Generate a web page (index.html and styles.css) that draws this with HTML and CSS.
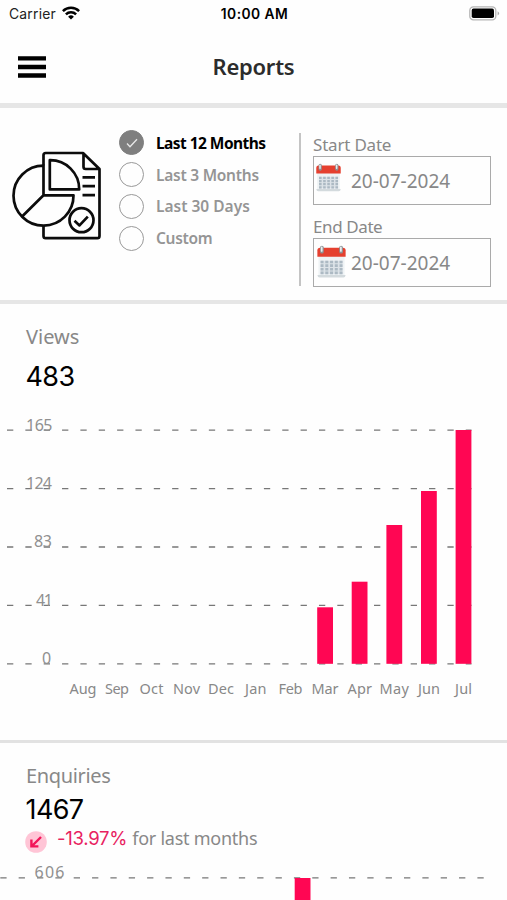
FILE: index.html
```html
<!DOCTYPE html>
<html lang="en">
<head>
<meta charset="utf-8">
<title>Reports</title>
<link rel="stylesheet" href="styles.css">
</head>
<body>
<div class="screen">
  <div class="status">
    <div class="carrier">Carrier
      <svg width="18" height="14" viewBox="0 0 18 14" fill="none" stroke="#000" stroke-width="2.5"><path d="M.9 5.2a11.5 11.5 0 0 1 16.2 0M3.9 8.3a7.2 7.2 0 0 1 10.2 0"/><path d="M9 13.6 6.1 10.7a4.1 4.1 0 0 1 5.8 0z" fill="#000" stroke="none"/></svg>
    </div>
    <div class="clock">10:00 AM</div>
    <svg class="battery" width="31" height="15" viewBox="0 0 31 15"><rect x=".8" y=".8" width="26" height="13" rx="3.6" fill="#fff" stroke="#b5b5b5" stroke-width="1.3"/><rect x="2.7" y="2.6" width="22.3" height="9.4" rx="1.8"/><path d="M28.6 5.2q3 2.2 0 4.4z" fill="#aaa"/></svg>
  </div>
  <header class="bar">
    <svg class="menu" width="28" height="22" viewBox="0 0 28 22"><path d="M0 2.4h28M0 11h28M0 19.5h28" stroke="#000" stroke-width="4.4"/></svg>
    <h1>Reports</h1>
  </header>
  <section class="filters">
    <svg class="report" width="91" height="90" viewBox="0 0 91 90" fill="none" stroke="#0c0c0c" stroke-width="2.7" stroke-linejoin="round">
      <path d="M31.5 14.5V4.2Q31.5 2 33.7 2H71L87.5 18V85Q87.5 87.2 85.3 87.2H33.7Q31.5 87.2 31.5 85V74.5M71.5 2V15.8Q71.5 18 73.7 18H87"/>
      <path d="M31.5 14.6A30 30 0 1 0 61.5 44.3H31.5zM31.5 44.3 10.6 65"/>
      <path d="M37.8 9.2A29 29 0 0 1 67.2 38.4H37.8z"/>
      <circle cx="69.5" cy="69.2" r="12" fill="#fff"/>
      <path d="M62.5 69.8l5 4.6 8.3-8.8M70.5 26.3H83M70.5 35.2H83M70.5 44.1H83"/>
    </svg>
    <div class="ranges">
      <div class="range on"><span class="dot"><svg width="14" height="12" viewBox="0 0 14 12"><path d="M2 6.5l3 3.3 7-7.6" fill="none" stroke="#e8e8e8" stroke-width="1.3"/></svg></span><span class="r12">Last 12 Months</span></div>
      <div class="range"><span class="dot"></span><span class="r3">Last 3 Months</span></div>
      <div class="range"><span class="dot"></span><span class="r30">Last 30 Days</span></div>
      <div class="range"><span class="dot"></span><span class="rc">Custom</span></div>
    </div>
    <div class="dates">
      <label class="ls">Start Date</label>
      <div class="field">
        <svg class="cal small" viewBox="0 0 28 32"><use href="#calendar"/></svg>
        <span>20-07-2024</span>
      </div>
      <label class="le">End Date</label>
      <div class="field">
        <svg class="cal" viewBox="0 0 28 32">
          <g id="calendar">
            <path d="M1.3 10h25.4v19q0 2-2 2h-21.4q-2 0-2-2z" fill="#eff3f5"/>
            <path d="M.5 29h27v.5q0 2-2 2h-23q-2 0-2-2z" fill="#d3dadd"/>
            <path d="M.3 11.5V5.2q0-2.6 2.6-2.6h22.2q2.6 0 2.6 2.6v6.3z" fill="#e5402f"/>
            <path d="M3.4 16.5h21.5M3.4 20h21.5M3.4 23.5h21.5M3.4 27h21.5" stroke="#a9b6c0" stroke-width="2.5" stroke-dasharray="2.9 1.7"/>
            <path d="M3.4 15.3h21.2v12.9H3.4z" fill="#b4c1c9" fill-opacity=".3"/>
            <path d="M4.7 2.5v4M23.3 2.5v4" stroke="#8d9396" stroke-width="3.6" stroke-linecap="round"/>
            <path d="M4.5 2.3v3.4M23.1 2.3v3.4" stroke="#e8ecee" stroke-width="1.7" stroke-linecap="round"/>
          </g>
        </svg>
        <span>20-07-2024</span>
      </div>
    </div>
  </section>
  <section class="views">
    <h2 class="tv">Views</h2>
    <div class="total">483</div>
    <svg class="chart" width="507" height="300" viewBox="0 410 507 300">
      <g class="grid"><path d="M7 430.2H471.5M7 488.7H471.5M7 547H471.5M7 605.4H471.5M7 663.8H471.5"/></g>
      <g class="bars">
        <rect x="317.2" y="607.3" width="15.8" height="56.5"/>
        <rect x="351.7" y="581.7" width="15.8" height="82.1"/>
        <rect x="386.4" y="525" width="15.8" height="138.8"/>
        <rect x="421" y="491" width="15.8" height="172.8"/>
        <rect x="455.6" y="430" width="15.8" height="233.8"/>
      </g>
      <g class="axis">
        <text x="26" y="430.5" textLength="26.5">165</text>
        <text x="26" y="489" textLength="26">124</text>
        <text x="34" y="547.3" textLength="18">83</text>
        <text x="36" y="605.7" textLength="17">41</text>
        <text x="42" y="664.1" textLength="10">0</text>
      </g>
      <g class="months">
        <text x="69.5" y="693.5" textLength="27">Aug</text>
        <text x="105" y="693.5" textLength="24">Sep</text>
        <text x="139.5" y="693.5" textLength="24">Oct</text>
        <text x="173" y="693.5" textLength="27">Nov</text>
        <text x="208" y="693.5" textLength="26">Dec</text>
        <text x="245" y="693.5" textLength="21.5">Jan</text>
        <text x="278.5" y="693.5" textLength="24">Feb</text>
        <text x="311.5" y="693.5" textLength="27">Mar</text>
        <text x="347.5" y="693.5" textLength="24.5">Apr</text>
        <text x="379.5" y="693.5" textLength="29.5">May</text>
        <text x="418" y="693.5" textLength="22">Jun</text>
        <text x="455" y="693.5" textLength="17">Jul</text>
      </g>
    </svg>
  </section>
  <section class="enquiries">
    <h2 class="te">Enquiries</h2>
    <div class="total">1467</div>
    <div class="trend">
      <svg width="22" height="22" viewBox="0 0 22 22"><circle cx="11" cy="11" r="10.8" fill="#ffc5d6"/><path d="M16 6 7 15M6.4 8.4V15.4H13.4" fill="none" stroke="#f21558" stroke-width="2.4"/></svg>
      <span class="pct">-13.97%</span><span class="note">for last months</span>
    </div>
    <svg class="chart" width="507" height="40" viewBox="0 860 507 40">
      <g class="grid"><path d="M.3 877.8H487"/></g>
      <g class="bars"><rect x="294.7" y="878" width="15.8" height="30"/></g>
      <g class="axis"><text x="34.5" y="878.3" textLength="30">606</text></g>
    </svg>
  </section>
</div>
</body>
</html>
```
FILE: styles.css
```css
* { box-sizing: border-box; }
body { margin: 0; background: #fefefe; font-family: "Noto Sans", sans-serif; color: #888; }
.screen { width: 507px; height: 900px; overflow: hidden; display: flex; flex-direction: column; }
.screen > * { flex-shrink: 0; }
span, label, h1, h2 { white-space: nowrap; }

.status { height: 28px; padding: 0 7px 0 9px; display: grid; grid-template-columns: 1fr auto 1fr; font-family: Inter, sans-serif; line-height: 28px; color: #000; }
.carrier { font-size: 13.9px; letter-spacing: .2px; color: #222; display: flex; gap: 6px; }
.carrier svg { margin-top: 6px; }
.clock { font-size: 13.8px; font-weight: 600; letter-spacing: .45px; }
.battery { justify-self: end; margin-top: 6px; }

.bar { height: 80px; display: flex; align-items: flex-start; border-bottom: 5px solid #e6e6e6; }
.menu { margin: 28px 0 0 17.5px; }
h1 { margin: 22px 0 0 167px; font-size: 22px; line-height: 32px; font-weight: 600; color: #2c2c2c; letter-spacing: -.25px; }

.filters { height: 196px; display: flex; border-bottom: 4px solid #e6e6e6; }
.report { margin: 43px 0 0 11.5px; }
.ranges { width: 180px; margin: 19px 0 0 16.5px; }
.range { height: 31.8px; display: flex; align-items: center; gap: 12px; font-size: 15.5px; font-weight: 600; color: #959595; }
.dot { width: 25px; height: 25px; border: 1.4px solid #999; border-radius: 50%; display: flex; align-items: center; justify-content: center; }
.on { color: #000; font-weight: 700; }
.on .dot { background: #7f7f7f; border-color: #7f7f7f; }
.r12 { letter-spacing: -.55px; }
.r3 { letter-spacing: -.25px; }
.r30 { letter-spacing: 0; }
.rc { letter-spacing: -.3px; }
.dates { height: 153px; margin-top: 25px; padding-left: 12px; border-left: 2.5px solid #c4c4c4; }
.dates label { display: block; height: 23px; line-height: 23px; font-size: 17px; letter-spacing: -.2px; }
.dates .le { margin-top: 10px; letter-spacing: -.4px; }
.field { width: 178px; height: 49px; border: 1.3px solid #aaa; display: flex; align-items: center; position: relative; padding-left: 37px; font-size: 19px; }
.field span { padding-top: 1px; }
.cal { position: absolute; left: 3px; top: 6px; width: 29px; height: 33px; }
.cal.small { top: 6px; left: 2px; width: 25px; height: 29px; }

h2 { margin: 0 0 0 26px; font-size: 20px; font-weight: 400; line-height: 30px; color: #888; }
.te { letter-spacing: -.35px; }
.total { margin-left: 25.5px; font-family: Inter, sans-serif; font-size: 27px; line-height: 34px; letter-spacing: -.6px; color: #000; }
.views { height: 439px; padding-top: 18px; border-bottom: 3px solid #e2e2e2; }
.views .total { margin-top: 8px; }
.views .chart { margin-top: 16px; }
.chart { display: block; font-size: 16px; }
.grid { stroke: #777; stroke-width: 1.3; stroke-dasharray: 6.3 12.05; fill: none; }
.bars { fill: #ff0653; }
.axis { fill: #909090; }
.months { font-size: 14.5px; fill: #888; }
.enquiries { padding-top: 18px; }
.enquiries .total { margin-top: 2px; }
.trend { height: 26px; display: flex; margin-left: 25px; font-size: 18px; line-height: 22px; letter-spacing: -.25px; }
.trend svg { margin-top: 4px; }
.pct { margin-left: 10px; font-family: Inter, sans-serif; font-size: 18.5px; color: #e8225f; }
.note { margin-left: 5px; }
.enquiries .chart { margin-top: 7px; }
```
